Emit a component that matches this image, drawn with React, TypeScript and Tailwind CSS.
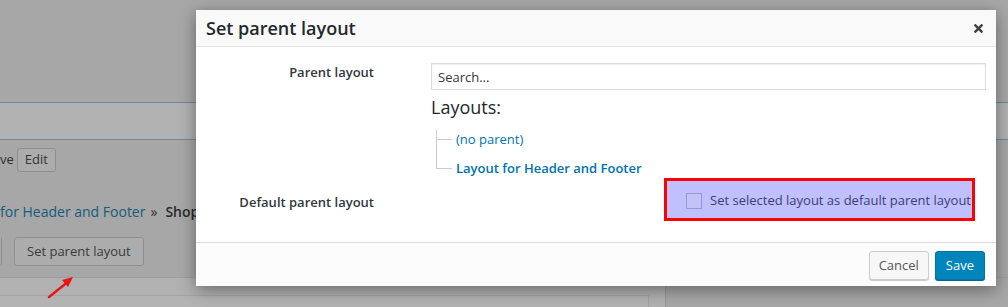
import { FaTimes } from "react-icons/fa";

const tree = [
  { label: "(no parent)", bold: false },
  { label: "Layout for Header and Footer", bold: true },
];

function PageBehind() {
  return (
    <div className="flex flex-col">
      <div className="h-[102px]" />
      <div className="h-[38px] border-y border-[#71899a] bg-[#b2b2b2]" />
      <div className="mt-[8px] flex h-[24px] items-center gap-[3px] text-[13px] text-[#2f2f2f]">
        <span>ve</span>
        <span className="flex h-[24px] items-center rounded-[3px] border border-[#8f8f8f] bg-[#acacac] px-[7px] text-[#363636]">
          Edit
        </span>
      </div>
      <div className="mt-[30px] flex h-[20px] items-center whitespace-nowrap text-[14px] leading-[20px]">
        <span className="text-[#155c7e]">for Header and Footer</span>
        <span className="ml-[5px] text-[#2f2f2f]">»</span>
        <span className="ml-[8px] font-semibold text-[#2a2a2a]">Shop</span>
      </div>
      <div className="mt-[15px] flex h-[29px] items-stretch">
        <span className="w-[2px] rounded-r-[3px] border-r border-[#8f8f8f]" />
        <span className="ml-[12px] flex items-center rounded-[3px] border border-[#8f8f8f] bg-[#acacac] px-[12px] text-[13px] text-[#3a3a3a]">
          Set parent layout
        </span>
      </div>
      <div className="mt-[11px] flex h-[40px] border-t border-[#9f9f9f]">
        <div className="flex w-[665px] flex-col bg-[#b1b1b1]">
          <div className="mt-[17px] h-[30px] w-[649px] border-t border-r border-[#a3a3a3] bg-[#b3b3b3]" />
        </div>
        <div className="flex-1 border-l border-[#999999] bg-[#a7a7a7]" />
      </div>
    </div>
  );
}

function Modal() {
  return (
    <div className="absolute left-[196px] top-[10px] w-[800px] bg-white shadow-[0_4px_16px_rgba(0,0,0,0.4)]">
      <div className="flex h-[37px] items-center justify-between border-b border-[#e5e5e5] bg-[#f9f9f9] pl-[10px] pr-[11px]">
        <h1 className="text-[18px] font-semibold text-[#23282d]">Set parent layout</h1>
        <FaTimes className="text-[#3f3f46]" size={13} />
      </div>

      <div className="flex flex-col pt-[16px] pb-[21px] pr-[10px]">
        <div className="flex">
          <div className="w-[178px] shrink-0 text-right text-[13px] font-semibold leading-[18px] text-[#32373c]">
            Parent layout
          </div>
          <div className="ml-[57px] flex flex-1 flex-col">
            <input
              className="h-[27px] border border-[#dddddd] px-[6px] text-[13px] text-[#32373c] shadow-[inset_0_1px_2px_rgba(0,0,0,0.07)] outline-none placeholder:text-[#32373c]"
              placeholder="Search..."
            />
            <div className="mt-[5px] text-[18px] leading-[24px] text-[#23282d]">Layouts:</div>
            <ul className="mt-[6px] pl-[5px]">
              {tree.map((item, i) => {
                const last = i === tree.length - 1;
                return (
                  <li key={item.label} className={`flex ${last ? "h-[24px]" : "h-[29px]"}`}>
                    <div className="flex w-[16px] flex-col">
                      {last ? (
                        <div className="h-[15px] border-b border-l border-[#cccccc]" />
                      ) : (
                        <>
                          <div className="mt-[5px] h-[10px] border-b border-l border-[#cccccc]" />
                          <div className="flex-1 border-l border-[#cccccc]" />
                        </>
                      )}
                    </div>
                    <span
                      className={`ml-[4px] pt-[5px] text-[13px] leading-[18px] text-[#0073aa] ${item.bold ? "font-semibold" : ""}`}
                    >
                      {item.label}
                    </span>
                  </li>
                );
              })}
            </ul>
          </div>
        </div>

        <div className="flex">
          <div className="w-[178px] shrink-0 pt-[15px] text-right text-[13px] font-semibold leading-[18px] text-[#32373c]">
            Default parent layout
          </div>
          <div className="ml-[57px] flex flex-1 justify-end pr-[11px]">
            <label className="flex h-[43px] items-center gap-[8px] border-[3px] border-[#ff0000] bg-[#c0c0fe] pl-[19px] pr-[1px] pt-[3px] text-[13px] text-[#3e3e6e]">
              <span className="h-[16px] w-[16px] border border-[#9898cc] bg-[#c3c3fa]" />
              Set selected layout as default parent layout
            </label>
          </div>
        </div>
      </div>

      <div className="flex h-[44px] items-start justify-end gap-[6px] border-t border-[#dddddd] bg-[#fcfcfc] pt-[8px] pr-[11px]">
        <button className="h-[29px] rounded-[3px] border border-[#cccccc] bg-[#f7f7f7] px-[9px] text-[13px] text-[#555555] shadow-[0_1px_0_#cccccc]">
          Cancel
        </button>
        <button className="h-[29px] rounded-[3px] border border-[#0073aa] bg-[#0085ba] px-[10px] text-[13px] text-white shadow-[0_1px_0_#006799]">
          Save
        </button>
      </div>
    </div>
  );
}

export default function App() {
  return (
    <div className="relative h-[307px] w-[1008px] overflow-hidden bg-[#a7a7a7] font-['Open_Sans',sans-serif]">
      <PageBehind />
      <svg className="absolute left-[40px] top-[270px]" width="40" height="34" viewBox="0 0 40 34">
        <line x1="9" y1="27" x2="29" y2="11" stroke="#e8141a" strokeWidth="2.4" strokeLinecap="round" />
        <polygon points="33,7 22,10 28,17" fill="#e8141a" />
      </svg>
      <Modal />
    </div>
  );
}
